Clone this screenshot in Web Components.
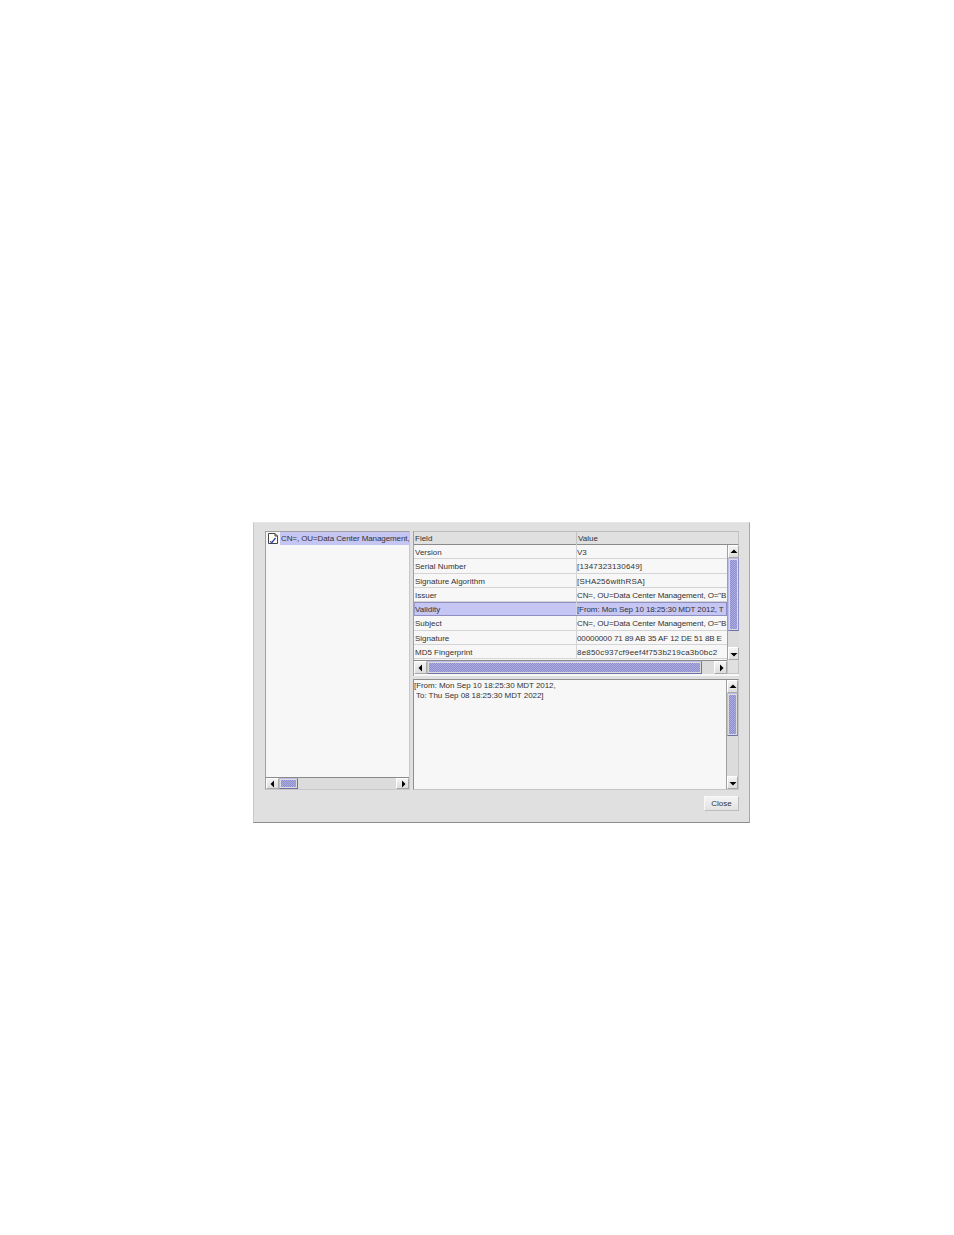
<!DOCTYPE html>
<html>
<head>
<meta charset="utf-8">
<title>Certificate</title>
<style>
  html, body { margin: 0; background: #fff; }
  body { padding: 522px 0 0 253px; min-height: 1235px; box-sizing: border-box; font: 8px "Liberation Sans", Arial, sans-serif; color: #333; }
</style>
</head>
<body>
<cert-dialog>
  <tree-pane slot="tree" label="CN=, OU=Data Center Management,"></tree-pane>
  <field-table slot="table"></field-table>
  <detail-pane slot="detail">[From: Mon Sep 10 18:25:30 MDT 2012,
 To: Thu Sep 08 18:25:30 MDT 2022]</detail-pane>
  <metal-button slot="actions">Close</metal-button>
</cert-dialog>

<script>
class certDialog extends HTMLElement {
    constructor() {
        super();
        this.attachShadow({ mode: "open" });
        this.shadowRoot.innerHTML = `
            <style>
                :host {
                    display: block;
                    width: 497px;
                    height: 301px;
                    box-sizing: border-box;
                    background: #e0e0e0;
                    border-right: 1px solid #a8a8a8;
                    border-bottom: 1px solid #8c8c8c;
                    border-left: 1px solid #c8c8c8;
                    border-top: 1px solid #e6e6e6;
                    padding: 8px 10px 0 11px;
                }
                .main {
                    display: grid;
                    grid-template-columns: 145px 326px;
                    column-gap: 3px;
                    height: 259px;
                }
                .right {
                    display: flex;
                    flex-direction: column;
                    gap: 3px;
                    min-width: 0;
                }
                .actions {
                    display: flex;
                    justify-content: flex-end;
                    margin-top: 6px;
                }
            </style>
            <div class="main">
                <slot name="tree"></slot>
                <div class="right">
                    <slot name="table"></slot>
                    <slot name="detail"></slot>
                </div>
            </div>
            <div class="actions"><slot name="actions"></slot></div>
        `;
    }
}

class metalScroll extends HTMLElement {
    constructor() {
        super();
        this.attachShadow({ mode: "open" });
    }

    connectedCallback() {
        const horizontal = this.getAttribute("dir") === "h";
        const thumb = this.getAttribute("thumb") || 20;
        const size = this.getAttribute("size") || 14;
        const arrow = horizontal
            ? ['<polygon points="7,2.5 7,9.5 3.5,6"/>', '<polygon points="5,2.5 5,9.5 8.5,6"/>']
            : ['<polygon points="2.5,7 9.5,7 6,3.5"/>', '<polygon points="2.5,5 9.5,5 6,8.5"/>'];
        this.shadowRoot.innerHTML = `
            <style>
                :host {
                    display: flex;
                    flex: none;
                    flex-direction: ${horizontal ? "row" : "column"};
                    box-sizing: border-box;
                    background: #dcdcdc;
                    ${horizontal ? `height: ${size}px;` : "width: 12px;"}
                    ${horizontal ? "border-top: 1px solid #8a8a8a;" : "border-left: 1px solid #a0a0a0;"}
                }
                .btn {
                    flex: none;
                    width: ${horizontal ? "13px" : "100%"};
                    height: ${horizontal ? "100%" : "13px"};
                    box-sizing: border-box;
                    background: linear-gradient(#f4f4f4, #dcdcdc);
                    border: 1px solid #fff;
                    border-right-color: #a8a8a8;
                    border-bottom-color: #a8a8a8;
                    display: flex;
                    align-items: center;
                    justify-content: center;
                }
                svg { width: 12px; height: 12px; flex: none; }
                .thumb {
                    flex: none;
                    ${horizontal ? "width" : "height"}: ${thumb}px;
                    box-sizing: border-box;
                    background-color: #a0a0da;
                    background-image: repeating-conic-gradient(#8e8eca 0 25%, #acace2 0 50%);
                    background-size: 2px 2px;
                    background-clip: content-box;
                    padding: 1px;
                    border: 1px solid #bcbcec;
                    border-bottom-color: #6e6ea8;
                    border-right-color: ${horizontal ? "#6e6ea8" : "#8e8eca"};
                }
                .track { flex: 1; }
            </style>
            <div class="btn"><svg viewBox="0 0 12 12" fill="#000">${arrow[0]}</svg></div>
            <div class="thumb"></div>
            <div class="track"></div>
            <div class="btn"><svg viewBox="0 0 12 12" fill="#000">${arrow[1]}</svg></div>
        `;
    }
}

class treePane extends HTMLElement {
    constructor() {
        super();
        this.attachShadow({ mode: "open" });
    }

    connectedCallback() {
        const label = this.getAttribute("label") || "";
        this.shadowRoot.innerHTML = `
            <style>
                :host {
                    display: flex;
                    flex-direction: column;
                    height: 259px;
                    box-sizing: border-box;
                    background: #f7f7f7;
                    border: 1px solid #a0a0a0;
                    border-right-color: #c8c8c8;
                    border-bottom-color: #c8c8c8;
                }
                .list { flex: 1; min-height: 0; overflow: hidden; }
                .node { display: flex; align-items: center; height: 13px; white-space: nowrap; margin-left: 1px; }
                svg { flex: none; width: 12px; height: 13px; margin-right: 1px; }
                .label { background: #c6c6f5; flex: 1; height: 13px; line-height: 14px; padding-left: 1px; overflow: hidden; letter-spacing: -0.1px; }
            </style>
            <div class="list">
                <div class="node">
                    <svg viewBox="0 0 12 13">
                        <path d="M1.5 1.5H8L10.5 4V11.5H1.5Z" fill="#fffef0" stroke="#444"/>
                        <path d="M8 1.5V4H10.5" fill="none" stroke="#444"/>
                        <path d="M3 9.5L5 10.5L8.5 6" fill="none" stroke="#2a3fb0" stroke-width="1.3"/>
                    </svg>
                    <span class="label">${label}</span>
                </div>
            </div>
            <metal-scroll dir="h" size="12" thumb="19"></metal-scroll>
        `;
    }
}

const FIELDS = [
    ["Version", "V3", ""],
    ["Serial Number", "[1347323130649]", "wide"],
    ["Signature Algorithm", "[SHA256withRSA]", "wide"],
    ["Issuer", 'CN=, OU=Data Center Management, O="B', "val"],
    ["Validity", "[From: Mon Sep 10 18:25:30 MDT 2012, T", "val"],
    ["Subject", 'CN=, OU=Data Center Management, O="B', "val"],
    ["Signature", "00000000 71 89 AB 35 AF 12 DE 51 8B E", "val"],
    ["MD5 Fingerprint", "8e850c937cf9eef4f753b219ca3b0bc2", "wide"]
];

class fieldTable extends HTMLElement {
    constructor() {
        super();
        this.attachShadow({ mode: "open" });
    }

    connectedCallback() {
        const rows = FIELDS.map((f, i) => `
            <div class="row ${i === 4 ? "sel" : ""}">
                <div class="cell">${f[0]}</div>
                <div class="cell ${f[2]}">${f[1]}</div>
            </div>`).join("");
        this.shadowRoot.innerHTML = `
            <style>
                :host {
                    display: grid;
                    grid-template-columns: 313px 12px;
                    grid-template-rows: 14px 115px 14px;
                    width: 326px;
                    height: 145px;
                    box-sizing: border-box;
                    border-left: 1px solid #a0a0a0;
                    background: #f7f7f7;
                }
                .head {
                    grid-column: 1 / 3;
                    display: grid;
                    grid-template-columns: 162px 1fr;
                    background: #e0e0e0;
                    border-top: 1px solid #bdbdbd;
                    border-right: 1px solid #c4c4c4;
                    border-bottom: 1px solid #8a8a8a;
                    box-sizing: border-box;
                    line-height: 14px;
                }
                .head div { padding-left: 1px; }
                .head div + div { border-left: 1px solid #c4c4c4; padding-left: 1px; }
                .body { overflow: hidden; }
                .row {
                    display: grid;
                    grid-template-columns: 162px 151px;
                    height: 14.28px;
                    box-sizing: border-box;
                    border-bottom: 1px solid #d4d4d4;
                    line-height: 15px;
                    white-space: nowrap;
                }
                .cell { overflow: hidden; padding-left: 1px; }
                .cell + .cell { border-left: 1px solid #d4d4d4; padding-left: 0; }
                .val { letter-spacing: -0.1px; }
                .wide { letter-spacing: 0.2px; }
                .sel { background: #c6c6f5; border: 1px solid #8f8fc4; border-left-color: #a0a0d0; grid-template-columns: 161px 150px; }
                .sel .cell { margin-top: -1px; }
                .sel .cell:first-child { margin-left: -1px; }
                .corner { background: #e0e0e0; border-left: 1px solid #c4c4c4; border-right: 1px solid #c4c4c4; border-bottom: 1px solid #c4c4c4; box-sizing: border-box; }
            </style>
            <div class="head"><div>Field</div><div>Value</div></div>
            <div class="body">${rows}</div>
            <metal-scroll thumb="73"></metal-scroll>
            <metal-scroll dir="h" thumb="275"></metal-scroll>
            <div class="corner"></div>
        `;
    }
}

class detailPane extends HTMLElement {
    constructor() {
        super();
        this.attachShadow({ mode: "open" });
        this.shadowRoot.innerHTML = `
            <style>
                :host {
                    display: grid;
                    grid-template-columns: 1fr 12px;
                    width: 326px;
                    height: 111px;
                    box-sizing: border-box;
                    background: #f7f7f7;
                    border: 1px solid #8e8e8e;
                    border-right-color: #c4c4c4;
                    border-bottom-color: #c4c4c4;
                }
                .text {
                    white-space: pre;
                    padding: 1px 0;
                    line-height: 10px;
                    letter-spacing: -0.05px;
                    overflow: hidden;
                }
            </style>
            <div class="text"><slot></slot></div>
            <metal-scroll thumb="43"></metal-scroll>
        `;
    }
}

class metalButton extends HTMLElement {
    constructor() {
        super();
        this.attachShadow({ mode: "open" });
        this.shadowRoot.innerHTML = `
            <style>
                :host {
                    display: flex;
                    align-items: center;
                    justify-content: center;
                    width: 35px;
                    height: 15px;
                    box-sizing: border-box;
                    background: linear-gradient(#f4f4f4, #e2e2e2);
                    border: 1px solid #f8f8f8;
                    border-right-color: #bcbcbc;
                    border-bottom-color: #bcbcbc;
                }
            </style>
            <slot></slot>
        `;
    }
}

customElements.define("metal-scroll", metalScroll);
customElements.define("cert-dialog", certDialog);
customElements.define("tree-pane", treePane);
customElements.define("field-table", fieldTable);
customElements.define("detail-pane", detailPane);
customElements.define("metal-button", metalButton);
</script>
</body>
</html>
